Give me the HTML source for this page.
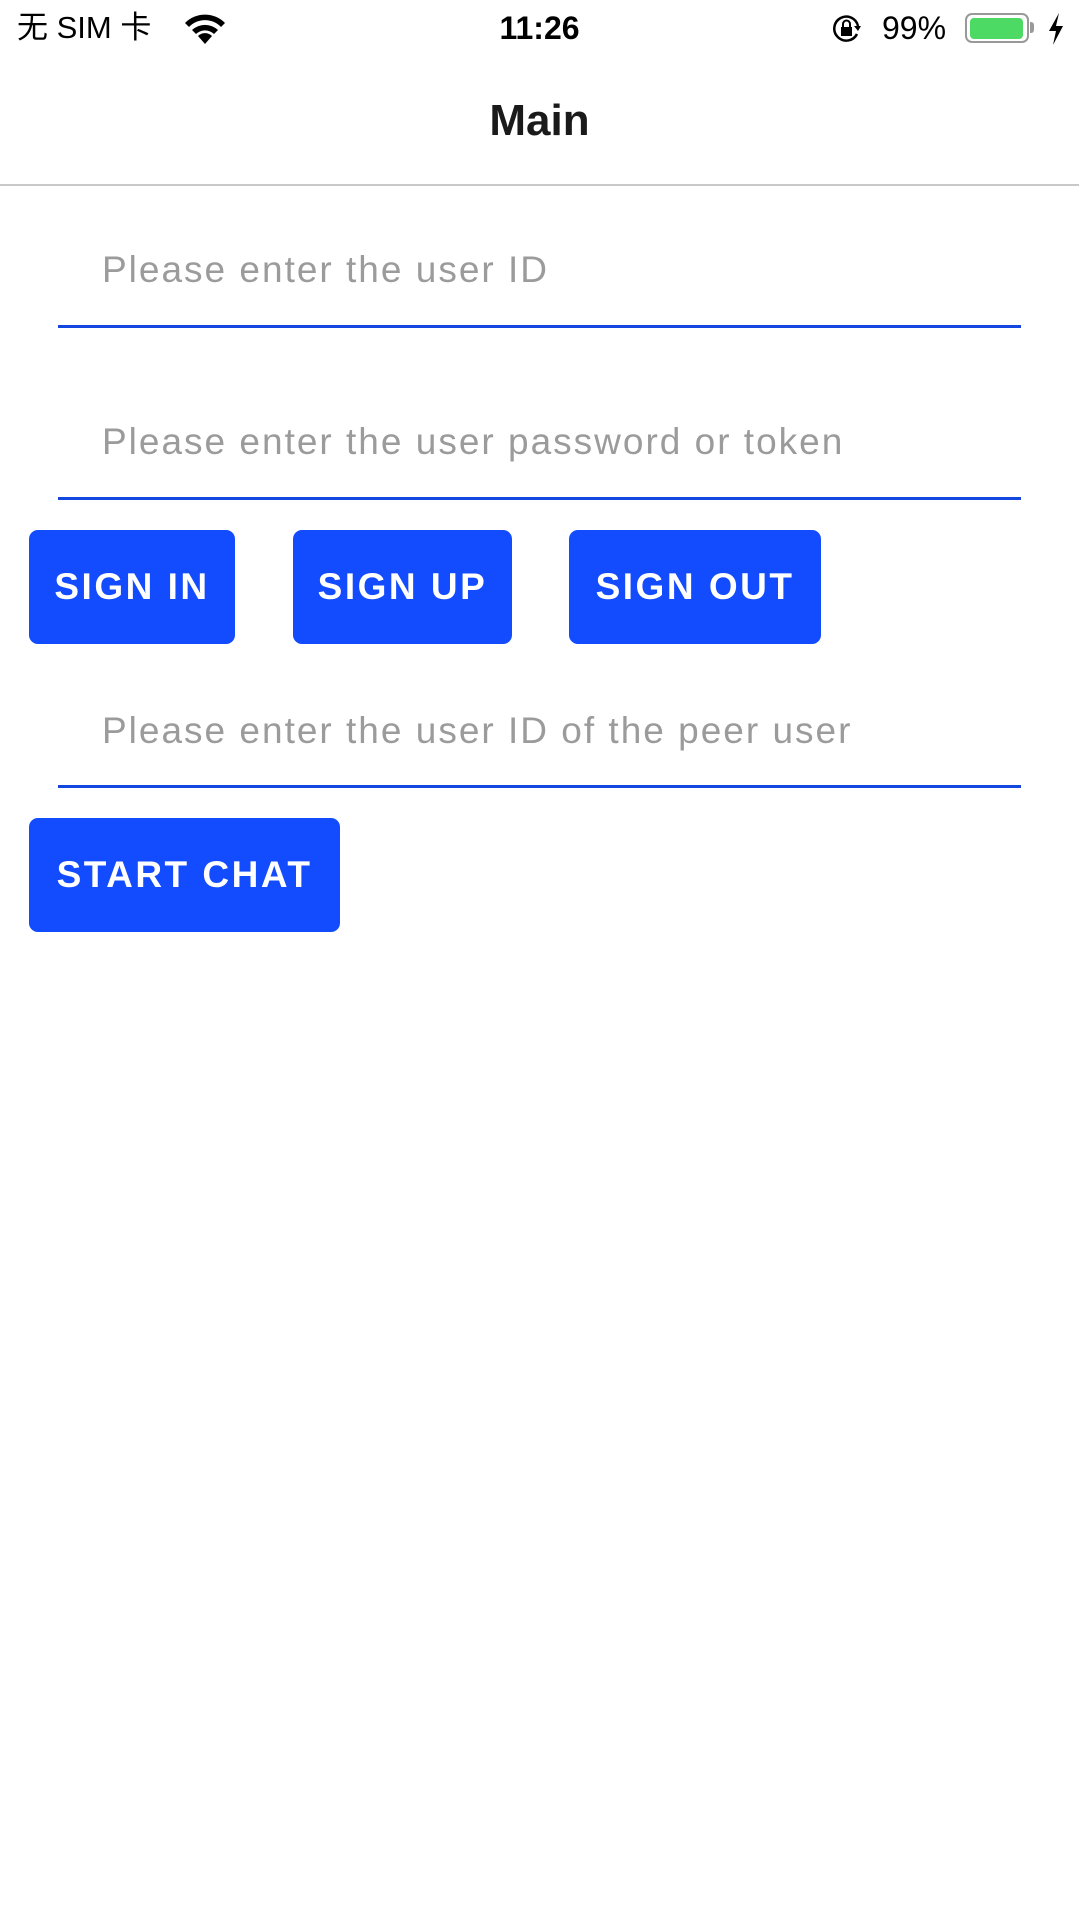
<!DOCTYPE html>
<html><head><meta charset="utf-8"><style>
html,body{margin:0;padding:0;background:#fff;}
body{width:1079px;height:1920px;position:relative;overflow:hidden;font-family:"Liberation Sans","Noto Sans CJK SC",sans-serif;}
.a{position:absolute;}
.ph{position:absolute;left:102px;font-size:37px;color:#9b9b9b;line-height:1;white-space:nowrap;letter-spacing:2px;}
.ul{position:absolute;left:58px;width:963px;height:3px;background:#1446e0;}
.btn{position:absolute;top:530px;height:114px;background:#134cff;border-radius:9px;color:#fff;font-weight:bold;font-size:37px;display:flex;align-items:center;justify-content:center;letter-spacing:2.5px;}
</style></head><body>
<div class="a" style="left:17px;top:12px;font-size:31px;color:#000;line-height:1;">无 SIM 卡</div>
<svg class="a" style="left:184px;top:14px" width="42" height="30" viewBox="0 0 42 30"><path d="M21 30 L14 22 A10 10 0 0 1 28 22 Z" fill="#000"/><path d="M8 16 A19 19 0 0 1 34 16 L30 20 A13 13 0 0 0 12 20 Z" fill="#000"/><path d="M1 9 A28 28 0 0 1 41 9 L37 13 A22 22 0 0 0 5 13 Z" fill="#000"/></svg>
<div class="a" style="left:0;width:1079px;top:12px;text-align:center;font-size:32px;font-weight:bold;line-height:1;">11:26</div>
<svg class="a" style="left:831px;top:14px" width="32" height="30" viewBox="0 0 32 30"><path d="M26 20 A12 12 0 1 1 27 12" fill="none" stroke="#000" stroke-width="2.5"/><path d="M23 12 L30 12 L27 17 Z" fill="#000"/><rect x="10" y="13" width="11" height="9" fill="#000"/><path d="M12 13 V10 A3.5 3.5 0 0 1 19 10 V13" fill="none" stroke="#000" stroke-width="2"/></svg>
<div class="a" style="left:882px;top:12px;font-size:32px;line-height:1;">99%</div>
<div class="a" style="left:965px;top:13px;width:60px;height:26px;border:2.5px solid #999;border-radius:7px;"></div>
<div class="a" style="left:970px;top:18px;width:53px;height:21px;background:#4cd964;border-radius:4px;"></div>
<div class="a" style="left:1030px;top:22px;width:4px;height:11px;background:#999;border-radius:0 3px 3px 0;"></div>
<svg class="a" style="left:1046px;top:13px" width="20" height="32" viewBox="0 0 20 32"><path d="M13 0 L3 18 L10 18 L7 32 L17 13 L10 13 Z" fill="#000"/></svg>
<div class="a" style="left:0;width:1079px;top:99px;text-align:center;font-size:44px;font-weight:bold;color:#1a1a1a;line-height:1;">Main</div>
<div class="a" style="left:0;top:184px;width:1079px;height:2px;background:#c8c8c8;"></div>
<div class="ph" style="top:251px;">Please enter the user ID</div>
<div class="ul" style="top:325px;"></div>
<div class="ph" style="top:423px;">Please enter the user password or token</div>
<div class="ul" style="top:497px;"></div>
<div class="btn" style="left:29px;width:206px;">SIGN IN</div>
<div class="btn" style="left:293px;width:219px;">SIGN UP</div>
<div class="btn" style="left:569px;width:252px;">SIGN OUT</div>
<div class="ph" style="top:712px;">Please enter the user ID of the peer user</div>
<div class="ul" style="top:785px;"></div>
<div class="btn" style="left:29px;width:311px;top:818px;height:114px;">START CHAT</div>
</body></html>
